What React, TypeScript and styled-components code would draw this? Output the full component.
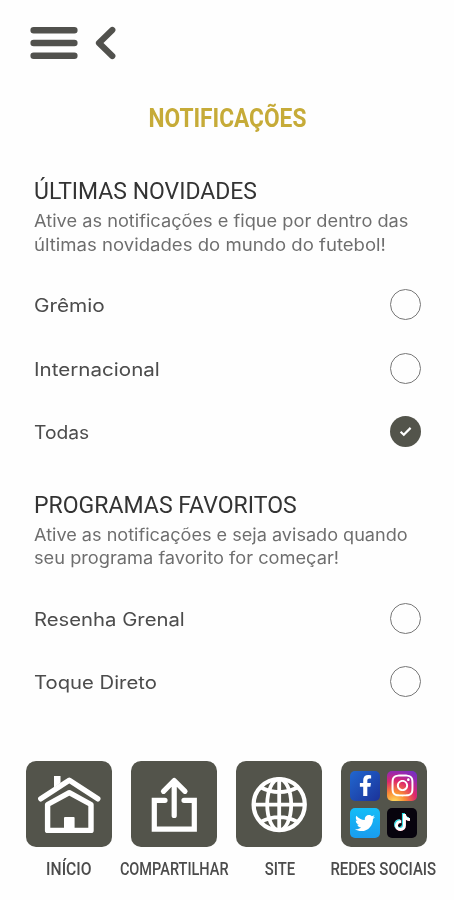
import React, { useState } from "react";
import styled, { createGlobalStyle } from "styled-components";
import { FaFacebookF, FaInstagram, FaTiktok, FaTwitter } from "react-icons/fa";

const GlobalStyle = createGlobalStyle`
  * { box-sizing: border-box; }
  body { margin: 0; background: #fefefe; }
`;

const Screen = styled.div`
  display: flex;
  flex-direction: column;
  width: 454px;
  height: 900px;
  overflow: hidden;
  background: #fefefe;
  font-family: Inter, sans-serif;
`;

const Header = styled.header`
  display: flex;
  align-items: center;
  gap: 16px;
  height: 102px;
  padding: 0 30px 16px;
`;

const IconButton = styled.button`
  display: flex;
  padding: 0;
  border: 0;
  background: none;
  color: #51514d;
  cursor: pointer;
`;

const Title = styled.h1`
  display: flex;
  justify-content: center;
  margin: 0;
  height: 32px;
  font: 700 26px/32px Roboto, sans-serif;
  color: #c6ab38;
  white-space: nowrap;
`;

const Stretch = styled.span<{ $x: number; $origin?: string }>`
  display: block;
  white-space: nowrap;
  transform: scaleX(${(p) => p.$x});
  transform-origin: ${(p) => p.$origin ?? "left"} center;
`;

const Main = styled.main`
  display: flex;
  flex-direction: column;
  gap: 28px;
  padding: 44px 33px 0 33.5px;
  height: 627px;
`;

const Section = styled.section`
  display: flex;
  flex-direction: column;
`;

const SectionTitle = styled.h2`
  margin: 0;
  font: 420 23px/28px Roboto, sans-serif;
  color: #333;
`;

const Description = styled.p`
  margin: 4px 0 0;
  font-size: 17px;
  line-height: 23.5px;
  color: #6e6e6e;
`;

const Options = styled.div`
  display: flex;
  flex-direction: column;
  margin-top: 15.4px;
`;

const Option = styled.button`
  display: flex;
  align-items: center;
  justify-content: space-between;
  height: 63.8px;
  padding: 0;
  border: 0;
  background: none;
  color: #4c4c4c;
  font: 430 18px/24px Inter, sans-serif;
  text-align: left;
  cursor: pointer;
`;

const OptionLabel = styled.span`
  padding-top: 3px;
`;

const Radio = styled.span<{ $checked: boolean }>`
  display: flex;
  align-items: center;
  justify-content: center;
  width: 31px;
  height: 31px;
  border-radius: 50%;
  border: ${(p) => (p.$checked ? "0" : "1.4px solid #777")};
  background: ${(p) => (p.$checked ? "#53544b" : "transparent")};
`;

const Footer = styled.nav`
  display: grid;
  grid-template-columns: 105.4px 105.4px 104.6px 104px;
  padding: 0 16.4px;
`;

const NavItem = styled.a`
  display: flex;
  flex-direction: column;
  align-items: center;
  gap: 11px;
  color: #4b4b4b;
  font: 500 18.5px/22px Roboto, sans-serif;
  text-decoration: none;
`;

const Tile = styled.span`
  display: flex;
  align-items: center;
  justify-content: center;
  width: 86px;
  height: 86px;
  border-radius: 10px;
  background: #53544b;
`;

const SocialGrid = styled.span`
  display: grid;
  grid-template-columns: 30px 30px;
  grid-auto-rows: 30px;
  gap: 7px;
`;

const SocialTile = styled.span<{ $fill: string }>`
  display: flex;
  align-items: center;
  justify-content: center;
  border-radius: 5px;
  color: #fff;
  background: ${(p) => p.$fill};
`;

const TikTokGlyph = styled(FaTiktok)`
  filter: drop-shadow(-0.9px -0.6px 0 #25dfe5) drop-shadow(0.9px 0.6px 0 #ef3157);
`;

type Line = { text: string; x: number };
type Group = {
  title: Line;
  description: Line[];
  options: Line[];
};

const groups: Group[] = [
  {
    title: { text: "ÚLTIMAS NOVIDADES", x: 0.998 },
    description: [
      { text: "Ative as notificações e fique por dentro das", x: 1.071 },
      { text: "últimas novidades do mundo do futebol!", x: 1.092 },
    ],
    options: [
      { text: "Grêmio", x: 1.155 },
      { text: "Internacional", x: 1.144 },
      { text: "Todas", x: 1.07 },
    ],
  },
  {
    title: { text: "PROGRAMAS FAVORITOS", x: 1.002 },
    description: [
      { text: "Ative as notificações e seja avisado quando", x: 1.064 },
      { text: "seu programa favorito for começar!", x: 1.072 },
    ],
    options: [
      { text: "Resenha Grenal", x: 1.127 },
      { text: "Toque Direto", x: 1.126 },
    ],
  },
];

const MenuIcon = () => (
  <svg width="48" height="36" viewBox="0 0 48 36" stroke="currentColor" strokeWidth="6.6" strokeLinecap="round">
    <path d="M3.7 5.2H44.3M3.7 18H44.3M3.7 30.8H44.3" />
  </svg>
);

const BackIcon = () => (
  <svg width="24" height="36" viewBox="0 0 24 36" fill="none" stroke="currentColor" strokeWidth="6.2" strokeLinecap="round" strokeLinejoin="round">
    <path d="M18.3 5 5 18 18.3 31" />
  </svg>
);

const CheckIcon = () => (
  <svg width="31" height="31" viewBox="0 0 31 31" fill="none" stroke="#fff" strokeWidth="2.2">
    <path d="M10.6 15.7 13.8 18.7 20.6 11.9" />
  </svg>
);

const HomeIcon = () => (
  <svg width="86" height="86" viewBox="0 0 86 86" fill="none" stroke="#fff" strokeWidth="5.4">
    <path d="M28 15H34.5V22L28 26.5Z" fill="#fff" stroke="none" />
    <path d="M14.8 37.8 43.3 19.3 71.8 37.8" strokeLinecap="round" strokeLinejoin="round" />
    <path d="M21.6 69.4V43.5L43.3 31.7 65 43.5V69.4Z" strokeLinejoin="round" />
    <path d="M38 70V57Q38 56 39 56H47.6Q48.6 56 48.6 57V70Z" fill="#fff" stroke="none" />
  </svg>
);

const ShareIcon = () => (
  <svg width="86" height="86" viewBox="0 0 86 86" fill="none" stroke="#fff" strokeWidth="5.2" strokeLinecap="round">
    <path d="M43.2 20V54.5M32.5 30.3 43.2 19.5 54 30.3" strokeLinejoin="round" />
    <path d="M34 39.3H23.3V68.2H63.3V39.3H53" />
  </svg>
);

const GlobeIcon = () => (
  <svg width="86" height="86" viewBox="0 0 86 86" fill="none" stroke="#fff" strokeWidth="3.8">
    <circle cx="43.2" cy="43.6" r="25.6" strokeWidth="4.2" />
    <ellipse cx="43.2" cy="43.6" rx="12" ry="25.6" />
    <path d="M43.2 18V69.2M17.6 43.6H68.8M24 26Q43.2 36.2 62.4 26M24 61.2Q43.2 51 62.4 61.2" />
  </svg>
);

const SocialIcon = () => (
  <SocialGrid>
    <SocialTile $fill="linear-gradient(135deg, #2167cf, #1b3299)">
      <FaFacebookF size={21} />
    </SocialTile>
    <SocialTile $fill="radial-gradient(circle at 25% 105%, #ffd35a 5%, #f98b35 28%, #dd276c 56%, #9929ae 78%, #5b35cf 105%)">
      <FaInstagram size={25} />
    </SocialTile>
    <SocialTile $fill="linear-gradient(180deg, #13bdf7, #199cef)">
      <FaTwitter size={20} />
    </SocialTile>
    <SocialTile $fill="#07030d">
      <TikTokGlyph size={17} />
    </SocialTile>
  </SocialGrid>
);

const navItems = [
  { text: "INÍCIO", x: 0.847, Icon: HomeIcon },
  { text: "COMPARTILHAR", x: 0.785, Icon: ShareIcon },
  { text: "SITE", x: 0.801, Icon: GlobeIcon },
  { text: "REDES SOCIAIS", x: 0.81, Icon: SocialIcon },
];

export default function App() {
  const [selected, setSelected] = useState<string[]>(["Todas"]);
  const toggle = (name: string) =>
    setSelected((s) => (s.includes(name) ? s.filter((n) => n !== name) : [...s, name]));

  return (
    <Screen>
      <GlobalStyle />
      <Header>
        <IconButton aria-label="Menu"><MenuIcon /></IconButton>
        <IconButton aria-label="Voltar"><BackIcon /></IconButton>
      </Header>
      <Title>
        <Stretch $x={0.873} $origin="center">NOTIFICAÇÕES</Stretch>
      </Title>
      <Main>
        {groups.map((g) => (
          <Section key={g.title.text}>
            <SectionTitle>
              <Stretch $x={g.title.x}>{g.title.text}</Stretch>
            </SectionTitle>
            <Description>
              {g.description.map((l) => (
                <Stretch key={l.text} $x={l.x}>{l.text}</Stretch>
              ))}
            </Description>
            <Options>
              {g.options.map((o) => {
                const checked = selected.includes(o.text);
                return (
                  <Option key={o.text} role="checkbox" aria-checked={checked} onClick={() => toggle(o.text)}>
                    <OptionLabel>
                      <Stretch $x={o.x}>{o.text}</Stretch>
                    </OptionLabel>
                    <Radio $checked={checked}>{checked && <CheckIcon />}</Radio>
                  </Option>
                );
              })}
            </Options>
          </Section>
        ))}
      </Main>
      <Footer>
        {navItems.map(({ text, x, Icon }) => (
          <NavItem key={text} href="#">
            <Tile><Icon /></Tile>
            <Stretch $x={x} $origin="center">{text}</Stretch>
          </NavItem>
        ))}
      </Footer>
    </Screen>
  );
}
